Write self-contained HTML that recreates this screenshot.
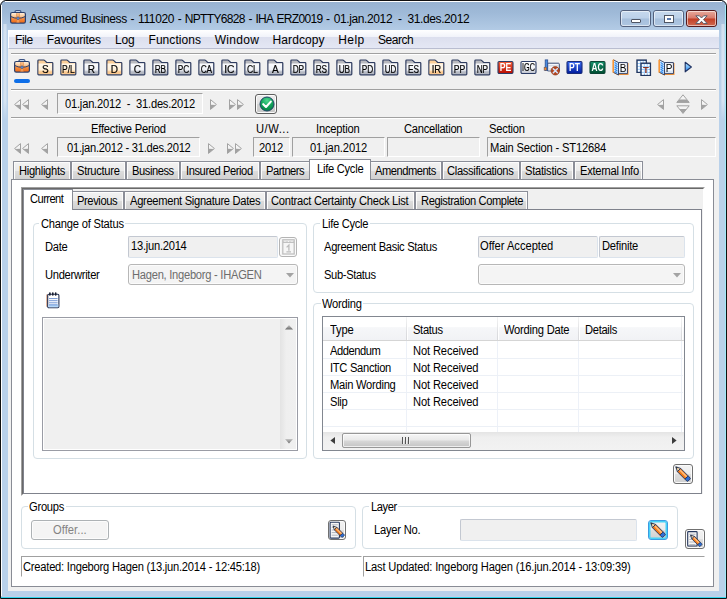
<!DOCTYPE html>
<html><head><meta charset="utf-8"><title>Assumed Business</title><style>
html,body{margin:0;padding:0;background:#fff}
body{width:727px;height:599px;overflow:hidden;position:relative;font-family:"Liberation Sans", Arial, sans-serif;font-size:11px}
#win{position:absolute;left:0;top:0;width:727px;height:599px;overflow:hidden}
.frame{position:absolute;left:0;top:0;width:727px;height:599px;box-sizing:border-box;border:1px solid #101010;border-radius:6px 6px 0 0;background:linear-gradient(#97b2d1 0,#9fbad8 12px,#b4cce6 30px,#b9d1ea 60px,#b9d1ea 100%)}
.hl-t{position:absolute;left:5px;top:1px;width:717px;height:1px;background:#fff}
.hl-l{position:absolute;left:1px;top:5px;width:1px;height:592px;background:#fff}
.hl-r{position:absolute;left:725px;top:5px;width:1px;height:592px;background:#9fe9f8}
.hl-b{position:absolute;left:1px;top:597px;width:725px;height:1px;background:#32d6ee;box-shadow:0 -1px 0 #c4cfe8}

.sb{position:absolute;top:24px;width:4px;height:96px;background:linear-gradient(rgba(185,209,234,0) 80%,#b9d1ea 100%),linear-gradient(90deg,rgba(255,255,255,.15),rgba(255,255,255,.5),rgba(255,255,255,.15))}
svg.g{will-change:transform}
#client{position:absolute;left:8px;top:30px;width:711px;height:561px;background:#f0f0f0}
#menu{position:absolute;left:8px;top:30px;width:711px;height:19px;box-sizing:border-box;border-bottom:1px solid #b9bdd0;border-left:1px solid #fff;background:linear-gradient(#ffffff 0,#f1f3fa 7px,#dcdfee 7px,#e4e7f4 18px)}
.t{position:absolute;white-space:pre;font-family:"Liberation Sans", Arial, sans-serif;transform-origin:0 0}
.cb{position:absolute;top:10px;height:17px;box-sizing:border-box;border:1px solid #53617d;border-radius:3px;background:linear-gradient(#c6d9ee 0,#bcd1e9 48%,#a6bfdc 52%,#aec6e1 100%)}
.cb .cbi{position:absolute;left:0;top:0;right:0;bottom:0;border:1px solid rgba(255,255,255,.55);border-radius:2px}
.cb.cl{border-color:#561a1c;background:linear-gradient(#e7aa9c 0,#d8796a 48%,#c23e25 52%,#cf6a52 100%)}
.btn{position:absolute;box-sizing:border-box;border:1px solid #707070;border-radius:3px;background:linear-gradient(#f3f3f3 0,#ececec 48%,#dedede 52%,#d0d0d0 100%);box-shadow:inset 0 0 0 1px #fbfbfb}
</style></head><body>
<div id="win">
<div class="frame"></div>
<div class="sb" style="left:3px"></div><div class="sb" style="left:721px"></div>
<div class="hl-t"></div><div class="hl-l"></div><div class="hl-r"></div><div class="hl-b"></div>
<svg width="16" height="16" viewBox="0 0 16 16" style="position:absolute;left:10px;top:9px">
<defs><linearGradient id="bgt" x1="0" y1="0" x2="0" y2="1"><stop offset="0" stop-color="#fff4e4"/><stop offset=".42" stop-color="#fac08a"/><stop offset=".5" stop-color="#f6944a"/><stop offset="1" stop-color="#ee6610"/></linearGradient></defs>
<path d="M5 3.2 Q5 1.5 6.5 1.5 H9.5 Q11 1.5 11 3.2" fill="#c8d8ee" stroke="#3b5384" stroke-width="1.2"/>
<rect x="0.6" y="3.5" width="14.8" height="10.6" rx="1.6" fill="url(#bgt)" stroke="#2c406c" stroke-width="1.2"/>
<path d="M1 7.6 Q4 9.3 8 9.3 Q12 9.3 15 7.6" fill="none" stroke="#2c406c" stroke-width="1"/>
<rect x="6.6" y="4.2" width="2.8" height="9.4" fill="#f7a867" opacity=".75"/>
<path d="M6.6 4.2V13.6M9.4 4.2V13.6" stroke="#d9782f" stroke-width=".5"/>
<circle cx="8" cy="9.2" r="1.3" fill="#6f9be0" stroke="#2c406c" stroke-width=".6"/>
</svg>
<span class="t" style="left:29.80px;top:10.84px;font-size:12px;line-height:16px;letter-spacing:-0.364px;color:#000;word-spacing:0.8px;">Assumed Business - 111020 -</span>
<span class="t" style="left:184.80px;top:10.84px;font-size:12px;line-height:16px;letter-spacing:-0.671px;color:#000;word-spacing:1.0px;">NPTTY6828 - IHA ERZ0019 -</span>
<span class="t" style="left:333.80px;top:10.84px;font-size:12px;line-height:16px;letter-spacing:-0.397px;color:#000;">01.jan.2012  -  31.des.2012</span>
<div class="cb" style="left:620px;width:31px"><div class="cbi"></div>
<div style="position:absolute;left:9.5px;top:7.5px;width:8px;height:2px;background:#fff;border:1px solid #4e5564;border-radius:1px"></div></div>
<div class="cb" style="left:653px;width:31px"><div class="cbi"></div>
<div style="position:absolute;left:10.5px;top:5px;width:4px;height:2px;border:2px solid #fff;outline:1px solid #4e5564;background:#5b7bb0"></div></div>
<div class="cb cl" style="left:686px;width:31px"><div class="cbi"></div>
<svg width="13" height="10" viewBox="0 0 13 10" style="position:absolute;left:8px;top:3.5px"><path d="M0.8 0.8 H4.4 L6.5 3 L8.6 0.8 H12.2 L8.5 4.6 L12.2 8.6 H8.6 L6.5 6.3 L4.4 8.6 H0.8 L4.5 4.6 Z" fill="#fff" stroke="#585d6a" stroke-width="1" stroke-linejoin="round"/></svg></div>
<div id="client">
</div>
<div id="menu"></div>
<span class="t" style="left:14.90px;top:31.84px;font-size:12px;line-height:16px;letter-spacing:-0.315px;color:#000;">File</span>
<span class="t" style="left:46.80px;top:31.84px;font-size:12px;line-height:16px;letter-spacing:-0.192px;color:#000;">Favourites</span>
<span class="t" style="left:114.90px;top:31.84px;font-size:12px;line-height:16px;letter-spacing:-0.166px;color:#000;">Log</span>
<span class="t" style="left:148.50px;top:31.84px;font-size:12px;line-height:16px;letter-spacing:0.059px;color:#000;">Functions</span>
<span class="t" style="left:214.70px;top:31.84px;font-size:12px;line-height:16px;letter-spacing:0.322px;color:#000;">Window</span>
<span class="t" style="left:272.60px;top:31.84px;font-size:12px;line-height:16px;letter-spacing:0.092px;color:#000;">Hardcopy</span>
<span class="t" style="left:338.30px;top:31.84px;font-size:12px;line-height:16px;letter-spacing:0.371px;color:#000;">Help</span>
<span class="t" style="left:378.10px;top:31.84px;font-size:12px;line-height:16px;letter-spacing:-0.486px;color:#000;">Search</span>
<div style="position:absolute;left:11px;top:53px;width:705px;height:1px;background:#a0a0a0"></div>
<div style="position:absolute;left:11px;top:54px;width:705px;height:1px;background:#fff"></div>
<div style="position:absolute;left:11px;top:89px;width:705px;height:1px;background:#a0a0a0"></div>
<div style="position:absolute;left:11px;top:90px;width:705px;height:1px;background:#fff"></div>
<div style="position:absolute;left:11px;top:117px;width:705px;height:1px;background:#a0a0a0"></div>
<div style="position:absolute;left:11px;top:118px;width:705px;height:1px;background:#fff"></div>
<svg width="16" height="16" viewBox="0 0 16 16" style="position:absolute;left:14px;top:58px">
<defs><linearGradient id="bgb" x1="0" y1="0" x2="0" y2="1"><stop offset="0" stop-color="#fff4e4"/><stop offset=".42" stop-color="#fac08a"/><stop offset=".5" stop-color="#f6944a"/><stop offset="1" stop-color="#ee6610"/></linearGradient></defs>
<path d="M5 3.2 Q5 1.5 6.5 1.5 H9.5 Q11 1.5 11 3.2" fill="#c8d8ee" stroke="#3b5384" stroke-width="1.2"/>
<rect x="0.6" y="3.5" width="14.8" height="10.6" rx="1.6" fill="url(#bgb)" stroke="#2c406c" stroke-width="1.2"/>
<path d="M1 7.6 Q4 9.3 8 9.3 Q12 9.3 15 7.6" fill="none" stroke="#2c406c" stroke-width="1"/>
<rect x="6.6" y="4.2" width="2.8" height="9.4" fill="#f7a867" opacity=".75"/>
<path d="M6.6 4.2V13.6M9.4 4.2V13.6" stroke="#d9782f" stroke-width=".5"/>
<circle cx="8" cy="9.2" r="1.3" fill="#6f9be0" stroke="#2c406c" stroke-width=".6"/>
</svg>
<div style="position:absolute;left:14px;top:79px;width:16px;height:4px;background:#0f6fe8;border-radius:2px"></div>
<svg width="18" height="17" viewBox="0 0 18 17" style="position:absolute;left:542.5px;top:58.5px">
<path d="M4.6 4.2 H15.4 Q16.3 4.2 16.3 5.1 V11.9 H4.6 Z" fill="#f4f6fa" stroke="#3a4c74" stroke-width="1"/>
<path d="M5.2 6.8 H15.8" stroke="#c3cad8" stroke-width=".9"/>
<path d="M5.2 9 H15.8 V11.4 H5.2Z" fill="#dfe4ec"/>
<rect x="2.2" y="0.9" width="2.5" height="10.6" fill="#4a8ce0" stroke="#2a4d8e" stroke-width=".8"/>
<rect x="1.1" y="8.2" width="2.6" height="3.2" fill="#f58a2a" stroke="#3a4c74" stroke-width=".5"/>
<circle cx="12.3" cy="11.8" r="4.2" fill="#b5461f" stroke="#8c3616" stroke-width=".7"/>
<path d="M10.3 9.8 L14.3 13.8 M14.3 9.8 L10.3 13.8" stroke="#d4e6ff" stroke-width="1.5" stroke-linecap="round"/>
</svg>
<svg width="9" height="12" viewBox="0 0 9 12" style="position:absolute;left:684.4px;top:61.4px">
<defs><linearGradient id="pl" x1="0" y1="0" x2="0" y2="1"><stop offset="0" stop-color="#b4e2ff"/><stop offset=".45" stop-color="#7cc0fa"/><stop offset="1" stop-color="#1f78ea"/></linearGradient></defs>
<path d="M1.2 1.2 L7.4 6 L1.2 10.8 Z" fill="url(#pl)" stroke="#1f3262" stroke-width="1.1" stroke-linejoin="round"/></svg>
<svg width="15" height="11" viewBox="0 0 15 11" style="position:absolute;left:14px;top:99px"><path d="M6.5 0.6 V10.4 L0.6 5.5 Z" fill="#f4f4f4" stroke="#a2a2a2" stroke-width="1" stroke-linejoin="round"/><path d="M6.5 5.8 V10.4 L1.2 6 Z" fill="#a2a2a2"/><path d="M14.5 0.6 V10.4 L8.6 5.5 Z" fill="#f4f4f4" stroke="#a2a2a2" stroke-width="1" stroke-linejoin="round"/><path d="M14.5 5.8 V10.4 L9.2 6 Z" fill="#a2a2a2"/></svg>
<svg width="7" height="11" viewBox="0 0 7 11" style="position:absolute;left:41px;top:99px"><path d="M6.5 0.6 V10.4 L0.6 5.5 Z" fill="#f4f4f4" stroke="#a2a2a2" stroke-width="1" stroke-linejoin="round"/><path d="M6.5 5.8 V10.4 L1.2 6 Z" fill="#a2a2a2"/></svg>
<svg width="7" height="11" viewBox="0 0 7 11" style="position:absolute;left:210px;top:99px"><path d="M0.5 0.6 V10.4 L6.4 5.5 Z" fill="#f4f4f4" stroke="#a2a2a2" stroke-width="1" stroke-linejoin="round"/><path d="M0.5 5.8 V10.4 L5.8 6 Z" fill="#a2a2a2"/></svg>
<svg width="15" height="11" viewBox="0 0 15 11" style="position:absolute;left:229px;top:99px"><path d="M0.5 0.6 V10.4 L6.4 5.5 Z" fill="#f4f4f4" stroke="#a2a2a2" stroke-width="1" stroke-linejoin="round"/><path d="M0.5 5.8 V10.4 L5.8 6 Z" fill="#a2a2a2"/><path d="M8.5 0.6 V10.4 L14.4 5.5 Z" fill="#f4f4f4" stroke="#a2a2a2" stroke-width="1" stroke-linejoin="round"/><path d="M8.5 5.8 V10.4 L13.8 6 Z" fill="#a2a2a2"/></svg>
<svg width="15" height="11" viewBox="0 0 15 11" style="position:absolute;left:14px;top:143px"><path d="M6.5 0.6 V10.4 L0.6 5.5 Z" fill="#f4f4f4" stroke="#a2a2a2" stroke-width="1" stroke-linejoin="round"/><path d="M6.5 5.8 V10.4 L1.2 6 Z" fill="#a2a2a2"/><path d="M14.5 0.6 V10.4 L8.6 5.5 Z" fill="#f4f4f4" stroke="#a2a2a2" stroke-width="1" stroke-linejoin="round"/><path d="M14.5 5.8 V10.4 L9.2 6 Z" fill="#a2a2a2"/></svg>
<svg width="7" height="11" viewBox="0 0 7 11" style="position:absolute;left:41px;top:143px"><path d="M6.5 0.6 V10.4 L0.6 5.5 Z" fill="#f4f4f4" stroke="#a2a2a2" stroke-width="1" stroke-linejoin="round"/><path d="M6.5 5.8 V10.4 L1.2 6 Z" fill="#a2a2a2"/></svg>
<svg width="7" height="11" viewBox="0 0 7 11" style="position:absolute;left:208px;top:143px"><path d="M0.5 0.6 V10.4 L6.4 5.5 Z" fill="#f4f4f4" stroke="#a2a2a2" stroke-width="1" stroke-linejoin="round"/><path d="M0.5 5.8 V10.4 L5.8 6 Z" fill="#a2a2a2"/></svg>
<svg width="15" height="11" viewBox="0 0 15 11" style="position:absolute;left:227px;top:143px"><path d="M0.5 0.6 V10.4 L6.4 5.5 Z" fill="#f4f4f4" stroke="#a2a2a2" stroke-width="1" stroke-linejoin="round"/><path d="M0.5 5.8 V10.4 L5.8 6 Z" fill="#a2a2a2"/><path d="M8.5 0.6 V10.4 L14.4 5.5 Z" fill="#f4f4f4" stroke="#a2a2a2" stroke-width="1" stroke-linejoin="round"/><path d="M8.5 5.8 V10.4 L13.8 6 Z" fill="#a2a2a2"/></svg>
<svg width="7" height="11" viewBox="0 0 7 11" style="position:absolute;left:657px;top:99px"><path d="M6.5 0.6 V10.4 L0.6 5.5 Z" fill="#f4f4f4" stroke="#a2a2a2" stroke-width="1" stroke-linejoin="round"/><path d="M6.5 5.8 V10.4 L1.2 6 Z" fill="#a2a2a2"/></svg>
<svg width="7" height="11" viewBox="0 0 7 11" style="position:absolute;left:701px;top:99px"><path d="M0.5 0.6 V10.4 L6.4 5.5 Z" fill="#f4f4f4" stroke="#a2a2a2" stroke-width="1" stroke-linejoin="round"/><path d="M0.5 5.8 V10.4 L5.8 6 Z" fill="#a2a2a2"/></svg>
<svg width="14" height="20" viewBox="0 0 14 20" style="position:absolute;left:675.6px;top:94.4px">
<path d="M7 0.8 L13.2 8.4 H0.8 Z" fill="#f4f4f4" stroke="#a2a2a2" stroke-linejoin="round"/><path d="M3.6 5.4 H10.4 L13.2 8.6 H0.8 Z" fill="#a2a2a2"/>
<path d="M7 19.4 L13.2 11.8 H0.8 Z" fill="#f4f4f4" stroke="#a2a2a2" stroke-linejoin="round"/><path d="M7 19.4 L10.6 15 H3.4 Z" fill="#a2a2a2"/></svg>
<div style="position:absolute;left:57px;top:93px;width:146px;height:21px;box-sizing:border-box;border:1px solid;border-color:#a0a0a0 #fff #fff #a0a0a0;background:#f0f0f0"></div>
<span class="t" style="left:64.70px;top:95.84px;font-size:12px;line-height:16px;letter-spacing:-0.231px;color:#000;transform:scaleX(0.930);">01.jan.2012  -  31.des.2012</span>
<div class="btn" style="left:255px;top:94px;width:22px;height:20px;border-color:#5e5e5e;background:linear-gradient(#ececec 0,#e2e2e2 48%,#d2d2d2 52%,#c6c6c6 100%)"></div>
<svg width="16" height="16" viewBox="0 0 16 16" style="position:absolute;left:258.5px;top:96px">
<defs><radialGradient id="gc" cx=".5" cy=".25" r=".8"><stop offset="0" stop-color="#4fd890"/><stop offset=".5" stop-color="#14a45c"/><stop offset="1" stop-color="#007a3c"/></radialGradient></defs>
<circle cx="8" cy="8" r="7" fill="url(#gc)" stroke="#1d4466" stroke-width="1"/>
<path d="M4.2 8.2 L7 11 L11.8 5.6" fill="none" stroke="#fff" stroke-width="2.1" stroke-linecap="round" stroke-linejoin="round"/></svg>
<span class="t" style="left:90.55px;top:120.84px;font-size:12px;line-height:16px;letter-spacing:-0.209px;color:#000;transform:scaleX(0.930);">Effective Period</span>
<span class="t" style="left:255.55px;top:120.84px;font-size:12px;line-height:16px;letter-spacing:0.573px;color:#000;transform:scaleX(0.930);">U/W...</span>
<span class="t" style="left:316.30px;top:120.84px;font-size:12px;line-height:16px;letter-spacing:-0.201px;color:#000;transform:scaleX(0.930);">Inception</span>
<span class="t" style="left:404.05px;top:120.84px;font-size:12px;line-height:16px;letter-spacing:-0.281px;color:#000;transform:scaleX(0.930);">Cancellation</span>
<span class="t" style="left:489.30px;top:120.84px;font-size:12px;line-height:16px;letter-spacing:-0.211px;color:#000;transform:scaleX(0.930);">Section</span>
<div style="position:absolute;left:57px;top:137px;width:143px;height:20px;box-sizing:border-box;border:1px solid;border-color:#a0a0a0 #fff #fff #a0a0a0;background:#f0f0f0"></div>
<div style="position:absolute;left:253px;top:137px;width:37px;height:20px;box-sizing:border-box;border:1px solid;border-color:#a0a0a0 #fff #fff #a0a0a0;background:#f0f0f0"></div>
<div style="position:absolute;left:292px;top:137px;width:93px;height:20px;box-sizing:border-box;border:1px solid;border-color:#a0a0a0 #fff #fff #a0a0a0;background:#f0f0f0"></div>
<div style="position:absolute;left:387px;top:137px;width:93px;height:20px;box-sizing:border-box;border:1px solid;border-color:#a0a0a0 #fff #fff #a0a0a0;background:#f0f0f0"></div>
<div style="position:absolute;left:487px;top:137px;width:229px;height:20px;box-sizing:border-box;border:1px solid;border-color:#a0a0a0 #fff #fff #a0a0a0;background:#f0f0f0"></div>
<span class="t" style="left:66.80px;top:139.84px;font-size:12px;line-height:16px;letter-spacing:-0.264px;color:#000;transform:scaleX(0.930);">01.jan.2012 - 31.des.2012</span>
<span class="t" style="left:259.30px;top:139.84px;font-size:12px;line-height:16px;letter-spacing:-0.191px;color:#000;transform:scaleX(0.930);">2012</span>
<span class="t" style="left:310.30px;top:139.84px;font-size:12px;line-height:16px;letter-spacing:-0.112px;color:#000;transform:scaleX(0.930);">01.jan.2012</span>
<span class="t" style="left:489.80px;top:139.84px;font-size:12px;line-height:16px;letter-spacing:-0.176px;color:#000;transform:scaleX(0.930);">Main Section - ST12684</span>
<div style="position:absolute;left:11px;top:179px;width:703px;height:408px;box-sizing:border-box;border:1px solid #898c95;background:#fff"></div>
<div style="position:absolute;left:13px;top:161px;width:58px;height:18px;box-sizing:border-box;border:1px solid #8b8e98;border-bottom:none;background:linear-gradient(#f2f2f2 0,#ebebeb 52%,#dddddd 52%,#d1d1d1 100%)"><div style="position:absolute;left:0;top:0;right:0;bottom:0;border:1px solid #fcfcfc;border-bottom:none"></div></div>
<span class="t" style="left:18.70px;top:162.84px;font-size:12px;line-height:16px;letter-spacing:-0.324px;color:#000;transform:scaleX(0.930);">Highlights</span>
<div style="position:absolute;left:71px;top:161px;width:55px;height:18px;box-sizing:border-box;border:1px solid #8b8e98;border-bottom:none;background:linear-gradient(#f2f2f2 0,#ebebeb 52%,#dddddd 52%,#d1d1d1 100%)"><div style="position:absolute;left:0;top:0;right:0;bottom:0;border:1px solid #fcfcfc;border-bottom:none"></div></div>
<span class="t" style="left:76.60px;top:162.84px;font-size:12px;line-height:16px;letter-spacing:-0.320px;color:#000;transform:scaleX(0.930);">Structure</span>
<div style="position:absolute;left:126px;top:161px;width:54px;height:18px;box-sizing:border-box;border:1px solid #8b8e98;border-bottom:none;background:linear-gradient(#f2f2f2 0,#ebebeb 52%,#dddddd 52%,#d1d1d1 100%)"><div style="position:absolute;left:0;top:0;right:0;bottom:0;border:1px solid #fcfcfc;border-bottom:none"></div></div>
<span class="t" style="left:131.70px;top:162.84px;font-size:12px;line-height:16px;letter-spacing:-0.475px;color:#000;transform:scaleX(0.930);">Business</span>
<div style="position:absolute;left:180px;top:161px;width:80px;height:18px;box-sizing:border-box;border:1px solid #8b8e98;border-bottom:none;background:linear-gradient(#f2f2f2 0,#ebebeb 52%,#dddddd 52%,#d1d1d1 100%)"><div style="position:absolute;left:0;top:0;right:0;bottom:0;border:1px solid #fcfcfc;border-bottom:none"></div></div>
<span class="t" style="left:185.80px;top:162.84px;font-size:12px;line-height:16px;letter-spacing:-0.454px;color:#000;transform:scaleX(0.930);">Insured Period</span>
<div style="position:absolute;left:260px;top:161px;width:51px;height:18px;box-sizing:border-box;border:1px solid #8b8e98;border-bottom:none;background:linear-gradient(#f2f2f2 0,#ebebeb 52%,#dddddd 52%,#d1d1d1 100%)"><div style="position:absolute;left:0;top:0;right:0;bottom:0;border:1px solid #fcfcfc;border-bottom:none"></div></div>
<span class="t" style="left:265.90px;top:162.84px;font-size:12px;line-height:16px;letter-spacing:-0.551px;color:#000;transform:scaleX(0.930);">Partners</span>
<div style="position:absolute;left:369px;top:161px;width:73px;height:18px;box-sizing:border-box;border:1px solid #8b8e98;border-bottom:none;background:linear-gradient(#f2f2f2 0,#ebebeb 52%,#dddddd 52%,#d1d1d1 100%)"><div style="position:absolute;left:0;top:0;right:0;bottom:0;border:1px solid #fcfcfc;border-bottom:none"></div></div>
<span class="t" style="left:374.80px;top:162.84px;font-size:12px;line-height:16px;letter-spacing:-0.532px;color:#000;transform:scaleX(0.930);">Amendments</span>
<div style="position:absolute;left:442px;top:161px;width:78px;height:18px;box-sizing:border-box;border:1px solid #8b8e98;border-bottom:none;background:linear-gradient(#f2f2f2 0,#ebebeb 52%,#dddddd 52%,#d1d1d1 100%)"><div style="position:absolute;left:0;top:0;right:0;bottom:0;border:1px solid #fcfcfc;border-bottom:none"></div></div>
<span class="t" style="left:447.20px;top:162.84px;font-size:12px;line-height:16px;letter-spacing:-0.348px;color:#000;transform:scaleX(0.930);">Classifications</span>
<div style="position:absolute;left:520px;top:161px;width:54px;height:18px;box-sizing:border-box;border:1px solid #8b8e98;border-bottom:none;background:linear-gradient(#f2f2f2 0,#ebebeb 52%,#dddddd 52%,#d1d1d1 100%)"><div style="position:absolute;left:0;top:0;right:0;bottom:0;border:1px solid #fcfcfc;border-bottom:none"></div></div>
<span class="t" style="left:525.40px;top:162.84px;font-size:12px;line-height:16px;letter-spacing:-0.269px;color:#000;transform:scaleX(0.930);">Statistics</span>
<div style="position:absolute;left:574px;top:161px;width:69px;height:18px;box-sizing:border-box;border:1px solid #8b8e98;border-bottom:none;background:linear-gradient(#f2f2f2 0,#ebebeb 52%,#dddddd 52%,#d1d1d1 100%)"><div style="position:absolute;left:0;top:0;right:0;bottom:0;border:1px solid #fcfcfc;border-bottom:none"></div></div>
<span class="t" style="left:579.70px;top:162.84px;font-size:12px;line-height:16px;letter-spacing:-0.319px;color:#000;transform:scaleX(0.930);">External Info</span>
<div style="position:absolute;left:309px;top:159px;width:62px;height:21px;box-sizing:border-box;border:1px solid #898c95;border-bottom:none;background:#fff"></div>
<span class="t" style="left:317.10px;top:160.84px;font-size:12px;line-height:16px;letter-spacing:-0.287px;color:#000;transform:scaleX(0.930);">Life Cycle</span>
<div style="position:absolute;left:21px;top:187px;width:684px;height:309px;box-sizing:border-box;border:1px solid;border-color:#a0a0a0 #fff #fff #a0a0a0;background:#f0f0f0"><div style="position:absolute;left:0;top:0;right:0;bottom:0;border:1px solid;border-color:#696969 #fff #fff #696969"></div></div>
<div style="position:absolute;left:23px;top:209px;width:679px;height:285px;box-sizing:border-box;border:1px solid #7f828c;background:#fff"></div>
<div style="position:absolute;left:71px;top:191px;width:53px;height:18px;box-sizing:border-box;border:1px solid #8b8e98;border-bottom:none;background:linear-gradient(#f2f2f2 0,#ebebeb 52%,#dddddd 52%,#d1d1d1 100%)"><div style="position:absolute;left:0;top:0;right:0;bottom:0;border:1px solid #fcfcfc;border-bottom:none"></div></div>
<span class="t" style="left:77.00px;top:192.84px;font-size:12px;line-height:16px;letter-spacing:-0.433px;color:#000;transform:scaleX(0.930);">Previous</span>
<div style="position:absolute;left:124px;top:191px;width:142px;height:18px;box-sizing:border-box;border:1px solid #8b8e98;border-bottom:none;background:linear-gradient(#f2f2f2 0,#ebebeb 52%,#dddddd 52%,#d1d1d1 100%)"><div style="position:absolute;left:0;top:0;right:0;bottom:0;border:1px solid #fcfcfc;border-bottom:none"></div></div>
<span class="t" style="left:129.70px;top:192.84px;font-size:12px;line-height:16px;letter-spacing:-0.324px;color:#000;transform:scaleX(0.930);">Agreement Signature Dates</span>
<div style="position:absolute;left:266px;top:191px;width:149px;height:18px;box-sizing:border-box;border:1px solid #8b8e98;border-bottom:none;background:linear-gradient(#f2f2f2 0,#ebebeb 52%,#dddddd 52%,#d1d1d1 100%)"><div style="position:absolute;left:0;top:0;right:0;bottom:0;border:1px solid #fcfcfc;border-bottom:none"></div></div>
<span class="t" style="left:270.90px;top:192.84px;font-size:12px;line-height:16px;letter-spacing:-0.286px;color:#000;transform:scaleX(0.930);">Contract Certainty Check List</span>
<div style="position:absolute;left:415px;top:191px;width:113px;height:18px;box-sizing:border-box;border:1px solid #8b8e98;border-bottom:none;background:linear-gradient(#f2f2f2 0,#ebebeb 52%,#dddddd 52%,#d1d1d1 100%)"><div style="position:absolute;left:0;top:0;right:0;bottom:0;border:1px solid #fcfcfc;border-bottom:none"></div></div>
<span class="t" style="left:421.10px;top:192.84px;font-size:12px;line-height:16px;letter-spacing:-0.426px;color:#000;transform:scaleX(0.930);">Registration Complete</span>
<div style="position:absolute;left:23px;top:189px;width:50px;height:21px;box-sizing:border-box;border:1px solid #898c95;border-bottom:none;background:#fff"></div>
<span class="t" style="left:30.20px;top:190.84px;font-size:12px;line-height:16px;letter-spacing:-0.612px;color:#000;transform:scaleX(0.930);">Current</span>
<div style="position:absolute;left:33px;top:223px;width:274px;height:236px;box-sizing:border-box;border:1px solid #d5dfe5;border-radius:4px"></div>
<div style="position:absolute;left:39.25px;top:221px;width:85.75px;height:5px;background:#fff"></div>
<span class="t" style="left:40.55px;top:215.84px;font-size:12px;line-height:16px;letter-spacing:-0.229px;color:#000;transform:scaleX(0.930);">Change of Status</span>
<div style="position:absolute;left:313px;top:223px;width:381px;height:70px;box-sizing:border-box;border:1px solid #d5dfe5;border-radius:4px"></div>
<div style="position:absolute;left:320.4px;top:221px;width:49.2px;height:5px;background:#fff"></div>
<span class="t" style="left:321.70px;top:215.84px;font-size:12px;line-height:16px;letter-spacing:-0.299px;color:#000;transform:scaleX(0.930);">Life Cycle</span>
<div style="position:absolute;left:313px;top:303px;width:381px;height:156px;box-sizing:border-box;border:1px solid #d5dfe5;border-radius:4px"></div>
<div style="position:absolute;left:320.5px;top:301px;width:42.75px;height:5px;background:#fff"></div>
<span class="t" style="left:321.80px;top:295.84px;font-size:12px;line-height:16px;letter-spacing:-0.234px;color:#000;transform:scaleX(0.930);">Wording</span>
<div style="position:absolute;left:21px;top:506px;width:335px;height:43px;box-sizing:border-box;border:1px solid #d5dfe5;border-radius:4px"></div>
<div style="position:absolute;left:27.5px;top:504px;width:38px;height:5px;background:#fff"></div>
<span class="t" style="left:28.80px;top:498.84px;font-size:12px;line-height:16px;letter-spacing:-0.280px;color:#000;transform:scaleX(0.930);">Groups</span>
<div style="position:absolute;left:362px;top:506px;width:316px;height:43px;box-sizing:border-box;border:1px solid #d5dfe5;border-radius:4px"></div>
<div style="position:absolute;left:369.25px;top:504px;width:29px;height:5px;background:#fff"></div>
<span class="t" style="left:370.55px;top:498.84px;font-size:12px;line-height:16px;letter-spacing:-0.438px;color:#000;transform:scaleX(0.930);">Layer</span>
<span class="t" style="left:44.80px;top:238.84px;font-size:12px;line-height:16px;letter-spacing:-0.317px;color:#000;transform:scaleX(0.930);">Date</span>
<div style="position:absolute;left:128px;top:236px;width:150px;height:22px;box-sizing:border-box;border:1px solid;border-color:#c3c8d1 #dbe3ec #dbe3ec #c3c8d1;border-radius:2px;background:#f0f0f0"></div>
<span class="t" style="left:131.30px;top:237.84px;font-size:12px;line-height:16px;letter-spacing:-0.273px;color:#000;transform:scaleX(0.930);">13.jun.2014</span>
<div style="position:absolute;left:279px;top:237px;width:18px;height:20px;box-sizing:border-box;border:1px solid #b4b4b4;border-radius:3px;background:#f4f4f4;box-shadow:inset 0 0 0 1px #fafafa"></div>
<svg width="13" height="16" viewBox="0 0 13 16" style="position:absolute;left:281.5px;top:239px">
<rect x="0.8" y="0.8" width="11.4" height="14.2" fill="#f6f6f6" stroke="#bcbcbc" stroke-width="1.2"/>
<path d="M1 3.2H12" stroke="#bcbcbc" stroke-width="1.4"/><path d="M3 2V3M6.5 2V3M10 2V3" stroke="#f6f6f6" stroke-width="1"/>
<path d="M4.6 8.4 L6.9 6 V11.8 M4.4 12.9H9" fill="none" stroke="#bcbcbc" stroke-width="1.3"/></svg>
<span class="t" style="left:44.80px;top:266.84px;font-size:12px;line-height:16px;letter-spacing:-0.309px;color:#000;transform:scaleX(0.930);">Underwriter</span>
<div style="position:absolute;left:128px;top:264px;width:170px;height:21px;box-sizing:border-box;border:1px solid #b7b7b7;border-radius:3px;background:#f4f4f4;box-shadow:inset 0 0 0 1px #fbfbfb"></div>
<svg width="8" height="5" viewBox="0 0 8 5" style="position:absolute;left:285.5px;top:272.5px"><path d="M0 0H8L4 4.5Z" fill="#a3a3a3"/></svg>
<span class="t" style="left:131.80px;top:266.84px;font-size:12px;line-height:16px;letter-spacing:-0.283px;color:#6d6d6d;transform:scaleX(0.930);">Hagen, Ingeborg - IHAGEN</span>
<svg width="14" height="17" viewBox="0 0 14 17" style="position:absolute;left:45.5px;top:291.5px">
<path d="M1.1 2.6V14.8" stroke="#c4642c" stroke-width="1.1"/>
<rect x="1.7" y="2.2" width="11.2" height="13.5" rx="1.2" fill="#fff" stroke="#202e52" stroke-width="1.1"/>
<rect x="2.3" y="12.4" width="10" height="2.8" fill="#b4d8fa"/>
<path d="M3 6.6H11.6M3 8.7H11.6M3 10.8H11.6M3 12.9H11.6" stroke="#6a8fd2" stroke-width=".95"/>
<path d="M3.9 1V3M6.8 1V3M9.7 1V3" stroke="#161c2e" stroke-width="1.6" stroke-linecap="round"/>
</svg>
<div style="position:absolute;left:42px;top:317px;width:256px;height:134px;box-sizing:border-box;border:1px solid #9a9ca5;background:#f0f0f0;box-shadow:inset 0 0 0 1px #fff"></div>
<div style="position:absolute;left:280px;top:319px;width:16px;height:130px;background:linear-gradient(90deg,#e3e3e3,#efefef 40%,#f0f0f0)"></div>
<svg width="8" height="5" viewBox="0 0 8 5" style="position:absolute;left:284.5px;top:325.3px"><defs><linearGradient id="ag" x1="0" y1="0" x2="0" y2="1"><stop offset="0" stop-color="#c8c8c8"/><stop offset="1" stop-color="#6a6a6a"/></linearGradient></defs><path d="M4 0L8 4.5H0Z" fill="url(#ag)"/></svg>
<svg width="8" height="5" viewBox="0 0 8 5" style="position:absolute;left:284.5px;top:438.7px"><path d="M0 0H8L4 4.5Z" fill="url(#ag)"/></svg>
<span class="t" style="left:324.30px;top:238.84px;font-size:12px;line-height:16px;letter-spacing:-0.329px;color:#000;transform:scaleX(0.930);">Agreement Basic Status</span>
<div style="position:absolute;left:478px;top:236px;width:120px;height:22px;box-sizing:border-box;border:1px solid;border-color:#c3c8d1 #dbe3ec #dbe3ec #c3c8d1;border-radius:2px;background:#f0f0f0"></div>
<span class="t" style="left:480.30px;top:237.84px;font-size:12px;line-height:16px;letter-spacing:-0.027px;color:#000;transform:scaleX(0.930);">Offer Accepted</span>
<div style="position:absolute;left:599px;top:236px;width:86px;height:22px;box-sizing:border-box;border:1px solid;border-color:#c3c8d1 #dbe3ec #dbe3ec #c3c8d1;border-radius:2px;background:#f0f0f0"></div>
<span class="t" style="left:602.30px;top:237.84px;font-size:12px;line-height:16px;letter-spacing:-0.236px;color:#000;transform:scaleX(0.930);">Definite</span>
<span class="t" style="left:324.30px;top:266.84px;font-size:12px;line-height:16px;letter-spacing:-0.379px;color:#000;transform:scaleX(0.930);">Sub-Status</span>
<div style="position:absolute;left:478px;top:264px;width:207px;height:21px;box-sizing:border-box;border:1px solid #b7b7b7;border-radius:3px;background:#f4f4f4;box-shadow:inset 0 0 0 1px #fbfbfb"></div>
<svg width="8" height="5" viewBox="0 0 8 5" style="position:absolute;left:672.5px;top:272.5px"><path d="M0 0H8L4 4.5Z" fill="#a3a3a3"/></svg>
<div style="position:absolute;left:322px;top:316px;width:363px;height:135px;box-sizing:border-box;border:1px solid #828790;background:#fff"></div>
<div style="position:absolute;left:323px;top:317px;width:361px;height:23px;background:linear-gradient(#fff 0,#fff 42%,#f6f7f9 46%,#f1f2f5 100%)"></div>
<div style="position:absolute;left:323px;top:340px;width:361px;height:1px;background:#d5d5d5"></div>
<div style="position:absolute;left:406px;top:317px;width:1px;height:23px;background:linear-gradient(#f4f4f4,#dcdde0 70%,#d8d9dc)"></div>
<div style="position:absolute;left:407px;top:317px;width:1px;height:23px;background:#fff"></div>
<div style="position:absolute;left:406px;top:341px;width:1px;height:91px;background:#edf1f8"></div>
<div style="position:absolute;left:497px;top:317px;width:1px;height:23px;background:linear-gradient(#f4f4f4,#dcdde0 70%,#d8d9dc)"></div>
<div style="position:absolute;left:498px;top:317px;width:1px;height:23px;background:#fff"></div>
<div style="position:absolute;left:497px;top:341px;width:1px;height:91px;background:#edf1f8"></div>
<div style="position:absolute;left:578px;top:317px;width:1px;height:23px;background:linear-gradient(#f4f4f4,#dcdde0 70%,#d8d9dc)"></div>
<div style="position:absolute;left:579px;top:317px;width:1px;height:23px;background:#fff"></div>
<div style="position:absolute;left:578px;top:341px;width:1px;height:91px;background:#edf1f8"></div>
<div style="position:absolute;left:681px;top:317px;width:1px;height:23px;background:linear-gradient(#f4f4f4,#dcdde0 70%,#d8d9dc)"></div>
<div style="position:absolute;left:682px;top:317px;width:1px;height:23px;background:#fff"></div>
<div style="position:absolute;left:681px;top:341px;width:1px;height:91px;background:#edf1f8"></div>
<div style="position:absolute;left:323px;top:358px;width:360px;height:1px;background:#ecf0f6"></div>
<div style="position:absolute;left:323px;top:375px;width:360px;height:1px;background:#ecf0f6"></div>
<div style="position:absolute;left:323px;top:392px;width:360px;height:1px;background:#ecf0f6"></div>
<div style="position:absolute;left:323px;top:409px;width:360px;height:1px;background:#ecf0f6"></div>
<div style="position:absolute;left:323px;top:426px;width:360px;height:1px;background:#ecf0f6"></div>
<span class="t" style="left:329.80px;top:321.84px;font-size:12px;line-height:16px;letter-spacing:-0.141px;color:#000;transform:scaleX(0.930);">Type</span>
<span class="t" style="left:412.55px;top:321.84px;font-size:12px;line-height:16px;letter-spacing:-0.344px;color:#000;transform:scaleX(0.930);">Status</span>
<span class="t" style="left:503.80px;top:321.84px;font-size:12px;line-height:16px;letter-spacing:-0.243px;color:#000;transform:scaleX(0.930);">Wording Date</span>
<span class="t" style="left:584.55px;top:321.84px;font-size:12px;line-height:16px;letter-spacing:-0.326px;color:#000;transform:scaleX(0.930);">Details</span>
<span class="t" style="left:329.80px;top:342.84px;font-size:12px;line-height:16px;letter-spacing:-0.489px;color:#000;transform:scaleX(0.930);">Addendum</span>
<span class="t" style="left:412.55px;top:342.84px;font-size:12px;line-height:16px;letter-spacing:-0.142px;color:#000;transform:scaleX(0.930);">Not Received</span>
<span class="t" style="left:329.80px;top:359.84px;font-size:12px;line-height:16px;letter-spacing:-0.315px;color:#000;transform:scaleX(0.930);">ITC Sanction</span>
<span class="t" style="left:412.55px;top:359.84px;font-size:12px;line-height:16px;letter-spacing:-0.142px;color:#000;transform:scaleX(0.930);">Not Received</span>
<span class="t" style="left:329.80px;top:376.84px;font-size:12px;line-height:16px;letter-spacing:-0.278px;color:#000;transform:scaleX(0.930);">Main Wording</span>
<span class="t" style="left:412.55px;top:376.84px;font-size:12px;line-height:16px;letter-spacing:-0.142px;color:#000;transform:scaleX(0.930);">Not Received</span>
<span class="t" style="left:329.80px;top:393.84px;font-size:12px;line-height:16px;letter-spacing:-0.300px;color:#000;transform:scaleX(0.930);">Slip</span>
<span class="t" style="left:412.55px;top:393.84px;font-size:12px;line-height:16px;letter-spacing:-0.142px;color:#000;transform:scaleX(0.930);">Not Received</span>
<div style="position:absolute;left:323px;top:432px;width:361px;height:18px;background:linear-gradient(#e4e4e4,#efefef 30%,#f2f2f2)"></div>
<div style="position:absolute;left:342px;top:433px;width:129px;height:15px;box-sizing:border-box;border:1px solid #979797;border-radius:2px;background:linear-gradient(#f6f6f6 0,#e9e9e9 48%,#d8d8d8 52%,#c4c4c4 100%);box-shadow:inset 0 0 0 1px rgba(255,255,255,.7)"></div>
<div style="position:absolute;left:402px;top:437px;width:1px;height:7px;background:#555"></div>
<div style="position:absolute;left:403px;top:437px;width:1px;height:7px;background:#eee"></div>
<div style="position:absolute;left:405px;top:437px;width:1px;height:7px;background:#555"></div>
<div style="position:absolute;left:406px;top:437px;width:1px;height:7px;background:#eee"></div>
<div style="position:absolute;left:408px;top:437px;width:1px;height:7px;background:#555"></div>
<div style="position:absolute;left:409px;top:437px;width:1px;height:7px;background:#eee"></div>
<svg width="5" height="7" viewBox="0 0 5 7" style="position:absolute;left:329.8px;top:437px"><path d="M5 0V7L0.4 3.5Z" fill="#3c3c3c"/></svg>
<svg width="5" height="7" viewBox="0 0 5 7" style="position:absolute;left:672.4px;top:437px"><path d="M0 0V7L4.6 3.5Z" fill="#3c3c3c"/></svg>
<div class="btn" style="left:673px;top:464px;width:20px;height:20px"></div>
<svg width="16" height="16" viewBox="0 0 16 16" style="position:absolute;left:675px;top:466px">
<g transform="rotate(45 8 8)">
<path d="M-2.2 8 L2.4 5.7 V10.3 Z" fill="#f7d9a8" stroke="#26385e" stroke-width=".9" stroke-linejoin="round"/>
<path d="M-2.2 8 L-0.2 7 V9 Z" fill="#333"/>
<rect x="2.4" y="5.7" width="10.6" height="4.6" fill="#f47a18" stroke="#26385e" stroke-width=".9"/>
<rect x="2.9" y="6.6" width="9.8" height="1.5" fill="#ffbe7e"/>
<rect x="13" y="5.7" width="3.6" height="4.6" rx="1" fill="#2f6fd6" stroke="#26385e" stroke-width=".9"/>
</g></svg>
<div class="btn" style="left:648px;top:520px;width:20px;height:20px;border-color:#3c9be2;box-shadow:inset 0 0 0 1.5px #46d2f8"></div>
<svg width="16" height="16" viewBox="0 0 16 16" style="position:absolute;left:650px;top:522px">
<g transform="rotate(45 8 8)">
<path d="M-2.2 8 L2.4 5.7 V10.3 Z" fill="#f7d9a8" stroke="#26385e" stroke-width=".9" stroke-linejoin="round"/>
<path d="M-2.2 8 L-0.2 7 V9 Z" fill="#333"/>
<rect x="2.4" y="5.7" width="10.6" height="4.6" fill="#f47a18" stroke="#26385e" stroke-width=".9"/>
<rect x="2.9" y="6.6" width="9.8" height="1.5" fill="#ffbe7e"/>
<rect x="13" y="5.7" width="3.6" height="4.6" rx="1" fill="#2f6fd6" stroke="#26385e" stroke-width=".9"/>
</g></svg>
<div class="btn" style="left:685px;top:529px;width:20px;height:20px"></div>
<svg width="20" height="20" viewBox="0 0 20 20" style="position:absolute;left:685px;top:529px">
<rect x="2.7" y="2.6" width="9.399999999999999" height="14.4" rx=".8" fill="#f8f8f8" stroke="#26385e" stroke-width="1.1"/>
<path d="M4.300000000000001 5.2H10.5M4.300000000000001 7.800000000000001H10.5M4.300000000000001 10.4H10.5M4.300000000000001 13.0H10.5M4.300000000000001 15.6H10.5" stroke="#a8aeb8" stroke-width=".9"/>
<g transform="translate(4.9 5.4) scale(0.79)"><g transform="rotate(45 8 8)"><path d="M-2.2 8 L2.4 5.7 V10.3 Z" fill="#f7d9a8" stroke="#26385e" stroke-width="1" stroke-linejoin="round"/>
<path d="M-2.2 8 L-0.2 7 V9 Z" fill="#333"/>
<rect x="2.4" y="5.7" width="10.6" height="4.6" fill="#f47a18" stroke="#26385e" stroke-width="1"/>
<rect x="2.9" y="6.6" width="9.8" height="1.5" fill="#ffbe7e"/>
<rect x="13" y="5.7" width="3.6" height="4.6" rx="1" fill="#2f6fd6" stroke="#26385e" stroke-width="1"/></g></g></svg>
<div class="btn" style="left:328px;top:520px;width:18px;height:20px"></div>
<svg width="18" height="20" viewBox="0 0 18 20" style="position:absolute;left:328px;top:520px">
<rect x="2.1" y="2.2" width="9.3" height="15.900000000000002" rx=".8" fill="#f8f8f8" stroke="#26385e" stroke-width="1.1"/>
<path d="M3.7 4.800000000000001H9.8M3.7 7.4H9.8M3.7 10.0H9.8M3.7 12.600000000000001H9.8M3.7 15.2H9.8" stroke="#a8aeb8" stroke-width=".9"/>
<g transform="translate(4.4 5.4) scale(0.78)"><g transform="rotate(45 8 8)"><path d="M-2.2 8 L2.4 5.7 V10.3 Z" fill="#f7d9a8" stroke="#26385e" stroke-width="1" stroke-linejoin="round"/>
<path d="M-2.2 8 L-0.2 7 V9 Z" fill="#333"/>
<rect x="2.4" y="5.7" width="10.6" height="4.6" fill="#f47a18" stroke="#26385e" stroke-width="1"/>
<rect x="2.9" y="6.6" width="9.8" height="1.5" fill="#ffbe7e"/>
<rect x="13" y="5.7" width="3.6" height="4.6" rx="1" fill="#2f6fd6" stroke="#26385e" stroke-width="1"/></g></g></svg>
<div style="position:absolute;left:31px;top:520px;width:78px;height:20px;box-sizing:border-box;border:1px solid #adb2b5;border-radius:3px;background:#f4f4f4;box-shadow:inset 0 0 0 1px #fcfcfc"></div>
<span class="t" style="left:52.70px;top:521.84px;font-size:12px;line-height:16px;letter-spacing:0.063px;color:#838383;transform:scaleX(0.930);">Offer...</span>
<span class="t" style="left:373.55px;top:521.84px;font-size:12px;line-height:16px;letter-spacing:-0.247px;color:#000;transform:scaleX(0.930);">Layer No.</span>
<div style="position:absolute;left:460px;top:519px;width:177px;height:22px;box-sizing:border-box;border:1px solid;border-color:#c3c8d1 #dbe3ec #dbe3ec #c3c8d1;border-radius:2px;background:#f0f0f0"></div>
<div style="position:absolute;left:21px;top:556px;width:341px;height:21px;box-sizing:border-box;border:1px solid;border-color:#a0a0a0 #fff #fff #a0a0a0;background:#fff"></div>
<div style="position:absolute;left:363px;top:556px;width:342px;height:21px;box-sizing:border-box;border:1px solid;border-color:#a0a0a0 #fff #fff #a0a0a0;background:#fff"></div>
<span class="t" style="left:23.30px;top:558.84px;font-size:12px;line-height:16px;letter-spacing:-0.249px;color:#000;transform:scaleX(0.930);">Created: Ingeborg Hagen (13.jun.2014 - 12:45:18)</span>
<span class="t" style="left:365.30px;top:558.84px;font-size:12px;line-height:16px;letter-spacing:-0.187px;color:#000;transform:scaleX(0.930);">Last Updated: Ingeborg Hagen (16.jun.2014 - 13:09:39)</span>
<svg class="g" width="17" height="17" viewBox="0 0 17 17" style="position:absolute;left:37px;top:58.5px">
<defs><linearGradient id="f37" x1="0" y1="0" x2="0" y2="1"><stop offset="0" stop-color="#fff8ec"/><stop offset=".62" stop-color="#fff0d8"/><stop offset=".8" stop-color="#fbc88e"/><stop offset="1" stop-color="#fbc88e"/></linearGradient></defs>
<path d="M0.9 1.8 Q0.9 1 1.7 1 H6.7 Q7.4 1 7.9 1.6 L9.6 3.5 H15 Q15.8 3.5 15.8 4.3 V15 Q15.8 15.8 15 15.8 H1.7 Q0.9 15.8 0.9 15 Z" fill="#fbcf98" stroke="#2e3c60" stroke-width="1.2"/>
<path d="M1.7 4.4 H15 V14.3 Q15 15 14.3 15 H2.4 Q1.7 15 1.7 14.3 Z" fill="url(#f37)"/>
<text x="8.4" y="13.5" font-family='"Liberation Sans", Arial, sans-serif' font-size="10" text-anchor="middle" fill="#000" stroke="#000" stroke-width=".18">S</text>
</svg>
<svg class="g" width="17" height="17" viewBox="0 0 17 17" style="position:absolute;left:60px;top:58.5px">
<defs><linearGradient id="f60" x1="0" y1="0" x2="0" y2="1"><stop offset="0" stop-color="#fff8ec"/><stop offset=".62" stop-color="#fff0d8"/><stop offset=".8" stop-color="#fbc88e"/><stop offset="1" stop-color="#fbc88e"/></linearGradient></defs>
<path d="M0.9 1.8 Q0.9 1 1.7 1 H6.7 Q7.4 1 7.9 1.6 L9.6 3.5 H15 Q15.8 3.5 15.8 4.3 V15 Q15.8 15.8 15 15.8 H1.7 Q0.9 15.8 0.9 15 Z" fill="#fbcf98" stroke="#2e3c60" stroke-width="1.2"/>
<path d="M1.7 4.4 H15 V14.3 Q15 15 14.3 15 H2.4 Q1.7 15 1.7 14.3 Z" fill="url(#f60)"/>
<text x="8.4" y="13.5" font-family='"Liberation Sans", Arial, sans-serif' font-size="10" text-anchor="middle" fill="#000" stroke="#000" stroke-width=".18" textLength="12.8" lengthAdjust="spacingAndGlyphs">P/L</text>
</svg>
<svg class="g" width="17" height="17" viewBox="0 0 17 17" style="position:absolute;left:83px;top:58.5px">
<defs><linearGradient id="f83" x1="0" y1="0" x2="0" y2="1"><stop offset="0" stop-color="#fafbfd"/><stop offset=".62" stop-color="#eef1f6"/><stop offset=".8" stop-color="#b4b8c2"/><stop offset="1" stop-color="#b4b8c2"/></linearGradient></defs>
<path d="M0.9 1.8 Q0.9 1 1.7 1 H6.7 Q7.4 1 7.9 1.6 L9.6 3.5 H15 Q15.8 3.5 15.8 4.3 V15 Q15.8 15.8 15 15.8 H1.7 Q0.9 15.8 0.9 15 Z" fill="#b8b9be" stroke="#2e3c60" stroke-width="1.2"/>
<path d="M1.7 4.4 H15 V14.3 Q15 15 14.3 15 H2.4 Q1.7 15 1.7 14.3 Z" fill="url(#f83)"/>
<text x="8.4" y="13.5" font-family='"Liberation Sans", Arial, sans-serif' font-size="10" text-anchor="middle" fill="#000" stroke="#000" stroke-width=".18">R</text>
</svg>
<svg class="g" width="17" height="17" viewBox="0 0 17 17" style="position:absolute;left:106px;top:58.5px">
<defs><linearGradient id="f106" x1="0" y1="0" x2="0" y2="1"><stop offset="0" stop-color="#fff8ec"/><stop offset=".62" stop-color="#fff0d8"/><stop offset=".8" stop-color="#fbc88e"/><stop offset="1" stop-color="#fbc88e"/></linearGradient></defs>
<path d="M0.9 1.8 Q0.9 1 1.7 1 H6.7 Q7.4 1 7.9 1.6 L9.6 3.5 H15 Q15.8 3.5 15.8 4.3 V15 Q15.8 15.8 15 15.8 H1.7 Q0.9 15.8 0.9 15 Z" fill="#fbcf98" stroke="#2e3c60" stroke-width="1.2"/>
<path d="M1.7 4.4 H15 V14.3 Q15 15 14.3 15 H2.4 Q1.7 15 1.7 14.3 Z" fill="url(#f106)"/>
<text x="8.4" y="13.5" font-family='"Liberation Sans", Arial, sans-serif' font-size="10" text-anchor="middle" fill="#000" stroke="#000" stroke-width=".18">D</text>
</svg>
<svg class="g" width="17" height="17" viewBox="0 0 17 17" style="position:absolute;left:129px;top:58.5px">
<defs><linearGradient id="f129" x1="0" y1="0" x2="0" y2="1"><stop offset="0" stop-color="#fafbfd"/><stop offset=".62" stop-color="#eef1f6"/><stop offset=".8" stop-color="#b4b8c2"/><stop offset="1" stop-color="#b4b8c2"/></linearGradient></defs>
<path d="M0.9 1.8 Q0.9 1 1.7 1 H6.7 Q7.4 1 7.9 1.6 L9.6 3.5 H15 Q15.8 3.5 15.8 4.3 V15 Q15.8 15.8 15 15.8 H1.7 Q0.9 15.8 0.9 15 Z" fill="#b8b9be" stroke="#2e3c60" stroke-width="1.2"/>
<path d="M1.7 4.4 H15 V14.3 Q15 15 14.3 15 H2.4 Q1.7 15 1.7 14.3 Z" fill="url(#f129)"/>
<text x="8.4" y="13.5" font-family='"Liberation Sans", Arial, sans-serif' font-size="10" text-anchor="middle" fill="#000" stroke="#000" stroke-width=".18">C</text>
</svg>
<svg class="g" width="17" height="17" viewBox="0 0 17 17" style="position:absolute;left:152px;top:58.5px">
<defs><linearGradient id="f152" x1="0" y1="0" x2="0" y2="1"><stop offset="0" stop-color="#fafbfd"/><stop offset=".62" stop-color="#eef1f6"/><stop offset=".8" stop-color="#b4b8c2"/><stop offset="1" stop-color="#b4b8c2"/></linearGradient></defs>
<path d="M0.9 1.8 Q0.9 1 1.7 1 H6.7 Q7.4 1 7.9 1.6 L9.6 3.5 H15 Q15.8 3.5 15.8 4.3 V15 Q15.8 15.8 15 15.8 H1.7 Q0.9 15.8 0.9 15 Z" fill="#b8b9be" stroke="#2e3c60" stroke-width="1.2"/>
<path d="M1.7 4.4 H15 V14.3 Q15 15 14.3 15 H2.4 Q1.7 15 1.7 14.3 Z" fill="url(#f152)"/>
<text x="8.4" y="13.5" font-family='"Liberation Sans", Arial, sans-serif' font-size="10" text-anchor="middle" fill="#000" stroke="#000" stroke-width=".18" textLength="11.5" lengthAdjust="spacingAndGlyphs">RB</text>
</svg>
<svg class="g" width="17" height="17" viewBox="0 0 17 17" style="position:absolute;left:175px;top:58.5px">
<defs><linearGradient id="f175" x1="0" y1="0" x2="0" y2="1"><stop offset="0" stop-color="#fafbfd"/><stop offset=".62" stop-color="#eef1f6"/><stop offset=".8" stop-color="#b4b8c2"/><stop offset="1" stop-color="#b4b8c2"/></linearGradient></defs>
<path d="M0.9 1.8 Q0.9 1 1.7 1 H6.7 Q7.4 1 7.9 1.6 L9.6 3.5 H15 Q15.8 3.5 15.8 4.3 V15 Q15.8 15.8 15 15.8 H1.7 Q0.9 15.8 0.9 15 Z" fill="#b8b9be" stroke="#2e3c60" stroke-width="1.2"/>
<path d="M1.7 4.4 H15 V14.3 Q15 15 14.3 15 H2.4 Q1.7 15 1.7 14.3 Z" fill="url(#f175)"/>
<text x="8.4" y="13.5" font-family='"Liberation Sans", Arial, sans-serif' font-size="10" text-anchor="middle" fill="#000" stroke="#000" stroke-width=".18" textLength="11.5" lengthAdjust="spacingAndGlyphs">PC</text>
</svg>
<svg class="g" width="17" height="17" viewBox="0 0 17 17" style="position:absolute;left:198px;top:58.5px">
<defs><linearGradient id="f198" x1="0" y1="0" x2="0" y2="1"><stop offset="0" stop-color="#fafbfd"/><stop offset=".62" stop-color="#eef1f6"/><stop offset=".8" stop-color="#b4b8c2"/><stop offset="1" stop-color="#b4b8c2"/></linearGradient></defs>
<path d="M0.9 1.8 Q0.9 1 1.7 1 H6.7 Q7.4 1 7.9 1.6 L9.6 3.5 H15 Q15.8 3.5 15.8 4.3 V15 Q15.8 15.8 15 15.8 H1.7 Q0.9 15.8 0.9 15 Z" fill="#b8b9be" stroke="#2e3c60" stroke-width="1.2"/>
<path d="M1.7 4.4 H15 V14.3 Q15 15 14.3 15 H2.4 Q1.7 15 1.7 14.3 Z" fill="url(#f198)"/>
<text x="8.4" y="13.5" font-family='"Liberation Sans", Arial, sans-serif' font-size="10" text-anchor="middle" fill="#000" stroke="#000" stroke-width=".18" textLength="11.5" lengthAdjust="spacingAndGlyphs">CA</text>
</svg>
<svg class="g" width="17" height="17" viewBox="0 0 17 17" style="position:absolute;left:221px;top:58.5px">
<defs><linearGradient id="f221" x1="0" y1="0" x2="0" y2="1"><stop offset="0" stop-color="#fafbfd"/><stop offset=".62" stop-color="#eef1f6"/><stop offset=".8" stop-color="#b4b8c2"/><stop offset="1" stop-color="#b4b8c2"/></linearGradient></defs>
<path d="M0.9 1.8 Q0.9 1 1.7 1 H6.7 Q7.4 1 7.9 1.6 L9.6 3.5 H15 Q15.8 3.5 15.8 4.3 V15 Q15.8 15.8 15 15.8 H1.7 Q0.9 15.8 0.9 15 Z" fill="#b8b9be" stroke="#2e3c60" stroke-width="1.2"/>
<path d="M1.7 4.4 H15 V14.3 Q15 15 14.3 15 H2.4 Q1.7 15 1.7 14.3 Z" fill="url(#f221)"/>
<text x="8.4" y="13.5" font-family='"Liberation Sans", Arial, sans-serif' font-size="10" text-anchor="middle" fill="#000" stroke="#000" stroke-width=".18" textLength="10.3" lengthAdjust="spacingAndGlyphs">IC</text>
</svg>
<svg class="g" width="17" height="17" viewBox="0 0 17 17" style="position:absolute;left:244px;top:58.5px">
<defs><linearGradient id="f244" x1="0" y1="0" x2="0" y2="1"><stop offset="0" stop-color="#fafbfd"/><stop offset=".62" stop-color="#eef1f6"/><stop offset=".8" stop-color="#b4b8c2"/><stop offset="1" stop-color="#b4b8c2"/></linearGradient></defs>
<path d="M0.9 1.8 Q0.9 1 1.7 1 H6.7 Q7.4 1 7.9 1.6 L9.6 3.5 H15 Q15.8 3.5 15.8 4.3 V15 Q15.8 15.8 15 15.8 H1.7 Q0.9 15.8 0.9 15 Z" fill="#b8b9be" stroke="#2e3c60" stroke-width="1.2"/>
<path d="M1.7 4.4 H15 V14.3 Q15 15 14.3 15 H2.4 Q1.7 15 1.7 14.3 Z" fill="url(#f244)"/>
<text x="8.4" y="13.5" font-family='"Liberation Sans", Arial, sans-serif' font-size="10" text-anchor="middle" fill="#000" stroke="#000" stroke-width=".18" textLength="11" lengthAdjust="spacingAndGlyphs">CL</text>
</svg>
<svg class="g" width="17" height="17" viewBox="0 0 17 17" style="position:absolute;left:267px;top:58.5px">
<defs><linearGradient id="f267" x1="0" y1="0" x2="0" y2="1"><stop offset="0" stop-color="#fafbfd"/><stop offset=".62" stop-color="#eef1f6"/><stop offset=".8" stop-color="#b4b8c2"/><stop offset="1" stop-color="#b4b8c2"/></linearGradient></defs>
<path d="M0.9 1.8 Q0.9 1 1.7 1 H6.7 Q7.4 1 7.9 1.6 L9.6 3.5 H15 Q15.8 3.5 15.8 4.3 V15 Q15.8 15.8 15 15.8 H1.7 Q0.9 15.8 0.9 15 Z" fill="#b8b9be" stroke="#2e3c60" stroke-width="1.2"/>
<path d="M1.7 4.4 H15 V14.3 Q15 15 14.3 15 H2.4 Q1.7 15 1.7 14.3 Z" fill="url(#f267)"/>
<text x="8.4" y="13.5" font-family='"Liberation Sans", Arial, sans-serif' font-size="10" text-anchor="middle" fill="#000" stroke="#000" stroke-width=".18">A</text>
</svg>
<svg class="g" width="17" height="17" viewBox="0 0 17 17" style="position:absolute;left:290px;top:58.5px">
<defs><linearGradient id="f290" x1="0" y1="0" x2="0" y2="1"><stop offset="0" stop-color="#fafbfd"/><stop offset=".62" stop-color="#eef1f6"/><stop offset=".8" stop-color="#b4b8c2"/><stop offset="1" stop-color="#b4b8c2"/></linearGradient></defs>
<path d="M0.9 1.8 Q0.9 1 1.7 1 H6.7 Q7.4 1 7.9 1.6 L9.6 3.5 H15 Q15.8 3.5 15.8 4.3 V15 Q15.8 15.8 15 15.8 H1.7 Q0.9 15.8 0.9 15 Z" fill="#b8b9be" stroke="#2e3c60" stroke-width="1.2"/>
<path d="M1.7 4.4 H15 V14.3 Q15 15 14.3 15 H2.4 Q1.7 15 1.7 14.3 Z" fill="url(#f290)"/>
<text x="8.4" y="13.5" font-family='"Liberation Sans", Arial, sans-serif' font-size="10" text-anchor="middle" fill="#000" stroke="#000" stroke-width=".18" textLength="11.5" lengthAdjust="spacingAndGlyphs">DP</text>
</svg>
<svg class="g" width="17" height="17" viewBox="0 0 17 17" style="position:absolute;left:313px;top:58.5px">
<defs><linearGradient id="f313" x1="0" y1="0" x2="0" y2="1"><stop offset="0" stop-color="#fafbfd"/><stop offset=".62" stop-color="#eef1f6"/><stop offset=".8" stop-color="#b4b8c2"/><stop offset="1" stop-color="#b4b8c2"/></linearGradient></defs>
<path d="M0.9 1.8 Q0.9 1 1.7 1 H6.7 Q7.4 1 7.9 1.6 L9.6 3.5 H15 Q15.8 3.5 15.8 4.3 V15 Q15.8 15.8 15 15.8 H1.7 Q0.9 15.8 0.9 15 Z" fill="#b8b9be" stroke="#2e3c60" stroke-width="1.2"/>
<path d="M1.7 4.4 H15 V14.3 Q15 15 14.3 15 H2.4 Q1.7 15 1.7 14.3 Z" fill="url(#f313)"/>
<text x="8.4" y="13.5" font-family='"Liberation Sans", Arial, sans-serif' font-size="10" text-anchor="middle" fill="#000" stroke="#000" stroke-width=".18" textLength="11.5" lengthAdjust="spacingAndGlyphs">RS</text>
</svg>
<svg class="g" width="17" height="17" viewBox="0 0 17 17" style="position:absolute;left:336px;top:58.5px">
<defs><linearGradient id="f336" x1="0" y1="0" x2="0" y2="1"><stop offset="0" stop-color="#fafbfd"/><stop offset=".62" stop-color="#eef1f6"/><stop offset=".8" stop-color="#b4b8c2"/><stop offset="1" stop-color="#b4b8c2"/></linearGradient></defs>
<path d="M0.9 1.8 Q0.9 1 1.7 1 H6.7 Q7.4 1 7.9 1.6 L9.6 3.5 H15 Q15.8 3.5 15.8 4.3 V15 Q15.8 15.8 15 15.8 H1.7 Q0.9 15.8 0.9 15 Z" fill="#b8b9be" stroke="#2e3c60" stroke-width="1.2"/>
<path d="M1.7 4.4 H15 V14.3 Q15 15 14.3 15 H2.4 Q1.7 15 1.7 14.3 Z" fill="url(#f336)"/>
<text x="8.4" y="13.5" font-family='"Liberation Sans", Arial, sans-serif' font-size="10" text-anchor="middle" fill="#000" stroke="#000" stroke-width=".18" textLength="11.5" lengthAdjust="spacingAndGlyphs">UB</text>
</svg>
<svg class="g" width="17" height="17" viewBox="0 0 17 17" style="position:absolute;left:359px;top:58.5px">
<defs><linearGradient id="f359" x1="0" y1="0" x2="0" y2="1"><stop offset="0" stop-color="#fafbfd"/><stop offset=".62" stop-color="#eef1f6"/><stop offset=".8" stop-color="#b4b8c2"/><stop offset="1" stop-color="#b4b8c2"/></linearGradient></defs>
<path d="M0.9 1.8 Q0.9 1 1.7 1 H6.7 Q7.4 1 7.9 1.6 L9.6 3.5 H15 Q15.8 3.5 15.8 4.3 V15 Q15.8 15.8 15 15.8 H1.7 Q0.9 15.8 0.9 15 Z" fill="#b8b9be" stroke="#2e3c60" stroke-width="1.2"/>
<path d="M1.7 4.4 H15 V14.3 Q15 15 14.3 15 H2.4 Q1.7 15 1.7 14.3 Z" fill="url(#f359)"/>
<text x="8.4" y="13.5" font-family='"Liberation Sans", Arial, sans-serif' font-size="10" text-anchor="middle" fill="#000" stroke="#000" stroke-width=".18" textLength="11.5" lengthAdjust="spacingAndGlyphs">PD</text>
</svg>
<svg class="g" width="17" height="17" viewBox="0 0 17 17" style="position:absolute;left:382px;top:58.5px">
<defs><linearGradient id="f382" x1="0" y1="0" x2="0" y2="1"><stop offset="0" stop-color="#fafbfd"/><stop offset=".62" stop-color="#eef1f6"/><stop offset=".8" stop-color="#b4b8c2"/><stop offset="1" stop-color="#b4b8c2"/></linearGradient></defs>
<path d="M0.9 1.8 Q0.9 1 1.7 1 H6.7 Q7.4 1 7.9 1.6 L9.6 3.5 H15 Q15.8 3.5 15.8 4.3 V15 Q15.8 15.8 15 15.8 H1.7 Q0.9 15.8 0.9 15 Z" fill="#b8b9be" stroke="#2e3c60" stroke-width="1.2"/>
<path d="M1.7 4.4 H15 V14.3 Q15 15 14.3 15 H2.4 Q1.7 15 1.7 14.3 Z" fill="url(#f382)"/>
<text x="8.4" y="13.5" font-family='"Liberation Sans", Arial, sans-serif' font-size="10" text-anchor="middle" fill="#000" stroke="#000" stroke-width=".18" textLength="11.5" lengthAdjust="spacingAndGlyphs">UD</text>
</svg>
<svg class="g" width="17" height="17" viewBox="0 0 17 17" style="position:absolute;left:405px;top:58.5px">
<defs><linearGradient id="f405" x1="0" y1="0" x2="0" y2="1"><stop offset="0" stop-color="#fafbfd"/><stop offset=".62" stop-color="#eef1f6"/><stop offset=".8" stop-color="#b4b8c2"/><stop offset="1" stop-color="#b4b8c2"/></linearGradient></defs>
<path d="M0.9 1.8 Q0.9 1 1.7 1 H6.7 Q7.4 1 7.9 1.6 L9.6 3.5 H15 Q15.8 3.5 15.8 4.3 V15 Q15.8 15.8 15 15.8 H1.7 Q0.9 15.8 0.9 15 Z" fill="#b8b9be" stroke="#2e3c60" stroke-width="1.2"/>
<path d="M1.7 4.4 H15 V14.3 Q15 15 14.3 15 H2.4 Q1.7 15 1.7 14.3 Z" fill="url(#f405)"/>
<text x="8.4" y="13.5" font-family='"Liberation Sans", Arial, sans-serif' font-size="10" text-anchor="middle" fill="#000" stroke="#000" stroke-width=".18" textLength="11" lengthAdjust="spacingAndGlyphs">ES</text>
</svg>
<svg class="g" width="17" height="17" viewBox="0 0 17 17" style="position:absolute;left:428px;top:58.5px">
<defs><linearGradient id="f428" x1="0" y1="0" x2="0" y2="1"><stop offset="0" stop-color="#fff8ec"/><stop offset=".62" stop-color="#fff0d8"/><stop offset=".8" stop-color="#fbc88e"/><stop offset="1" stop-color="#fbc88e"/></linearGradient></defs>
<path d="M0.9 1.8 Q0.9 1 1.7 1 H6.7 Q7.4 1 7.9 1.6 L9.6 3.5 H15 Q15.8 3.5 15.8 4.3 V15 Q15.8 15.8 15 15.8 H1.7 Q0.9 15.8 0.9 15 Z" fill="#fbcf98" stroke="#2e3c60" stroke-width="1.2"/>
<path d="M1.7 4.4 H15 V14.3 Q15 15 14.3 15 H2.4 Q1.7 15 1.7 14.3 Z" fill="url(#f428)"/>
<text x="8.4" y="13.5" font-family='"Liberation Sans", Arial, sans-serif' font-size="10" text-anchor="middle" fill="#000" stroke="#000" stroke-width=".18" textLength="9.5" lengthAdjust="spacingAndGlyphs">IR</text>
</svg>
<svg class="g" width="17" height="17" viewBox="0 0 17 17" style="position:absolute;left:451px;top:58.5px">
<defs><linearGradient id="f451" x1="0" y1="0" x2="0" y2="1"><stop offset="0" stop-color="#fafbfd"/><stop offset=".62" stop-color="#eef1f6"/><stop offset=".8" stop-color="#b4b8c2"/><stop offset="1" stop-color="#b4b8c2"/></linearGradient></defs>
<path d="M0.9 1.8 Q0.9 1 1.7 1 H6.7 Q7.4 1 7.9 1.6 L9.6 3.5 H15 Q15.8 3.5 15.8 4.3 V15 Q15.8 15.8 15 15.8 H1.7 Q0.9 15.8 0.9 15 Z" fill="#b8b9be" stroke="#2e3c60" stroke-width="1.2"/>
<path d="M1.7 4.4 H15 V14.3 Q15 15 14.3 15 H2.4 Q1.7 15 1.7 14.3 Z" fill="url(#f451)"/>
<text x="8.4" y="13.5" font-family='"Liberation Sans", Arial, sans-serif' font-size="10" text-anchor="middle" fill="#000" stroke="#000" stroke-width=".18" textLength="11.5" lengthAdjust="spacingAndGlyphs">PP</text>
</svg>
<svg class="g" width="17" height="17" viewBox="0 0 17 17" style="position:absolute;left:474px;top:58.5px">
<defs><linearGradient id="f474" x1="0" y1="0" x2="0" y2="1"><stop offset="0" stop-color="#fafbfd"/><stop offset=".62" stop-color="#eef1f6"/><stop offset=".8" stop-color="#b4b8c2"/><stop offset="1" stop-color="#b4b8c2"/></linearGradient></defs>
<path d="M0.9 1.8 Q0.9 1 1.7 1 H6.7 Q7.4 1 7.9 1.6 L9.6 3.5 H15 Q15.8 3.5 15.8 4.3 V15 Q15.8 15.8 15 15.8 H1.7 Q0.9 15.8 0.9 15 Z" fill="#b8b9be" stroke="#2e3c60" stroke-width="1.2"/>
<path d="M1.7 4.4 H15 V14.3 Q15 15 14.3 15 H2.4 Q1.7 15 1.7 14.3 Z" fill="url(#f474)"/>
<text x="8.4" y="13.5" font-family='"Liberation Sans", Arial, sans-serif' font-size="10" text-anchor="middle" fill="#000" stroke="#000" stroke-width=".18" textLength="11.5" lengthAdjust="spacingAndGlyphs">NP</text>
</svg>
<svg class="g" width="17" height="15" viewBox="0 0 17 15" style="position:absolute;left:496.5px;top:60px">
<defs><linearGradient id="l497" x1="0" y1="0" x2="0" y2="1"><stop offset="0" stop-color="#f4603a"/><stop offset="1" stop-color="#b80c00"/></linearGradient></defs>
<rect x="1" y="1.5" width="15" height="12" rx="1.2" fill="url(#l497)" stroke="#2b3c66" stroke-width="1.1"/>
<text x="8.5" y="11" font-family='"Liberation Sans", Arial, sans-serif' font-size="10" font-weight="bold" text-anchor="middle" fill="#fff" textLength="11.6" lengthAdjust="spacingAndGlyphs">PE</text></svg>
<svg class="g" width="17" height="15" viewBox="0 0 17 15" style="position:absolute;left:519.5px;top:60px">
<defs><linearGradient id="ligc" x1="0" y1="0" x2="0" y2="1"><stop offset="0" stop-color="#ffffff"/><stop offset=".6" stop-color="#eef1f6"/><stop offset="1" stop-color="#b9bec9"/></linearGradient></defs>
<rect x="1" y="1.5" width="15" height="12" rx="1.2" fill="url(#ligc)" stroke="#2b3c66" stroke-width="1.1"/>
<text x="8.5" y="11" font-family='"Liberation Sans", Arial, sans-serif' font-size="10" text-anchor="middle" fill="#000" stroke="#000" stroke-width=".2" textLength="12.8" lengthAdjust="spacingAndGlyphs">IGC</text></svg>
<svg class="g" width="17" height="15" viewBox="0 0 17 15" style="position:absolute;left:565.5px;top:60px">
<defs><linearGradient id="l566" x1="0" y1="0" x2="0" y2="1"><stop offset="0" stop-color="#3a6cf0"/><stop offset="1" stop-color="#001c9c"/></linearGradient></defs>
<rect x="1" y="1.5" width="15" height="12" rx="1.2" fill="url(#l566)" stroke="#1a2c78" stroke-width="1.1"/>
<text x="8.5" y="11" font-family='"Liberation Sans", Arial, sans-serif' font-size="10" font-weight="bold" text-anchor="middle" fill="#fff" textLength="10.8" lengthAdjust="spacingAndGlyphs">PT</text></svg>
<svg class="g" width="17" height="15" viewBox="0 0 17 15" style="position:absolute;left:588.5px;top:60px">
<defs><linearGradient id="l589" x1="0" y1="0" x2="0" y2="1"><stop offset="0" stop-color="#16906c"/><stop offset="1" stop-color="#004c30"/></linearGradient></defs>
<rect x="1" y="1.5" width="15" height="12" rx="1.2" fill="url(#l589)" stroke="#0c4434" stroke-width="1.1"/>
<text x="8.5" y="11" font-family='"Liberation Sans", Arial, sans-serif' font-size="10" font-weight="bold" text-anchor="middle" fill="#fff" textLength="12" lengthAdjust="spacingAndGlyphs">AC</text></svg>
<svg class="g" width="17" height="17" viewBox="0 0 17 17" style="position:absolute;left:611.5px;top:58.5px">
<path d="M6.4 4 H16.5 V16 H6.4 Z" fill="#f6973a"/>
<path d="M0.4 1 L1.6 0.6 L6.6 15 L6.6 16.6 L0.4 13.6 Z" fill="#f6973a"/>
<path d="M6.5 3.6 H15.4 V14.6 H6.5 Z" fill="#fbfcfe" stroke="#2e3c60" stroke-width="1"/>
<path d="M7 11.6H14.9V14.1H7Z" fill="#d6e4f4"/>
<path d="M1.5 0.9 L6.5 3.5 V16 L1.5 13.3 Z" fill="#d2e8ff" stroke="#2e3c60" stroke-width=".9" stroke-linejoin="round"/>
<path d="M2.2 0.9 L1.5 0.9 L1.5 13.3" fill="none" stroke="#f6973a" stroke-width="1"/>
<path d="M2.6 3.4 L5.4 5.6 M2.6 5.6 L5.4 7.8 M2.6 7.8 L5.4 10 M2.6 10 L5.4 12.2 M2.6 12.2 L5.4 14.4" stroke="#2f88ea" stroke-width="1.15"/>
<text x="11" y="12.6" font-family='"Liberation Sans", Arial, sans-serif' font-size="10" text-anchor="middle" fill="#000">B</text></svg>
<svg class="g" width="16" height="17" viewBox="0 0 16 17" style="position:absolute;left:635.5px;top:58.5px">
<rect x="1" y="1.1" width="9.2" height="12.2" fill="#9ccdfb" stroke="#22365f" stroke-width="1.4"/>
<rect x="1.9" y="2.1" width="1.9" height="1.9" fill="#fff"/><rect x="1.9" y="5.0" width="1.9" height="1.9" fill="#fff"/><rect x="1.9" y="7.9" width="1.9" height="1.9" fill="#fff"/><rect x="1.9" y="10.8" width="1.9" height="1.9" fill="#fff"/><rect x="4.8" y="2.1" width="1.9" height="1.9" fill="#fff"/><rect x="4.8" y="5.0" width="1.9" height="1.9" fill="#fff"/><rect x="4.8" y="7.9" width="1.9" height="1.9" fill="#fff"/><rect x="4.8" y="10.8" width="1.9" height="1.9" fill="#fff"/><rect x="7.7" y="2.1" width="1.9" height="1.9" fill="#fff"/><rect x="7.7" y="5.0" width="1.9" height="1.9" fill="#fff"/><rect x="7.7" y="7.9" width="1.9" height="1.9" fill="#fff"/><rect x="7.7" y="10.8" width="1.9" height="1.9" fill="#fff"/>
<rect x="5" y="4.2" width="9.4" height="12.2" fill="#9ccdfb" stroke="#22365f" stroke-width="1.4"/>
<rect x="5.9" y="5.2" width="1.9" height="1.9" fill="#fff"/><rect x="5.9" y="8.1" width="1.9" height="1.9" fill="#fff"/><rect x="5.9" y="11.0" width="1.9" height="1.9" fill="#fff"/><rect x="5.9" y="13.9" width="1.9" height="1.9" fill="#fff"/><rect x="8.8" y="5.2" width="1.9" height="1.9" fill="#fff"/><rect x="8.8" y="8.1" width="1.9" height="1.9" fill="#fff"/><rect x="8.8" y="11.0" width="1.9" height="1.9" fill="#fff"/><rect x="8.8" y="13.9" width="1.9" height="1.9" fill="#fff"/><rect x="11.7" y="5.2" width="1.9" height="1.9" fill="#fff"/><rect x="11.7" y="8.1" width="1.9" height="1.9" fill="#fff"/><rect x="11.7" y="11.0" width="1.9" height="1.9" fill="#fff"/><rect x="11.7" y="13.9" width="1.9" height="1.9" fill="#fff"/>
<text x="9.8" y="13.7" font-family='"Liberation Sans", Arial, sans-serif' font-size="9.5" font-weight="bold" text-anchor="middle" fill="#8a3020">T</text></svg>
<svg class="g" width="17" height="17" viewBox="0 0 17 17" style="position:absolute;left:657.5px;top:58.5px">
<path d="M6.4 4 H16.5 V16 H6.4 Z" fill="#f6973a"/>
<path d="M0.4 1 L1.6 0.6 L6.6 15 L6.6 16.6 L0.4 13.6 Z" fill="#f6973a"/>
<path d="M6.5 3.6 H15.4 V14.6 H6.5 Z" fill="#fbfcfe" stroke="#2e3c60" stroke-width="1"/>
<path d="M7 11.6H14.9V14.1H7Z" fill="#d6e4f4"/>
<path d="M1.5 0.9 L6.5 3.5 V16 L1.5 13.3 Z" fill="#d2e8ff" stroke="#2e3c60" stroke-width=".9" stroke-linejoin="round"/>
<path d="M2.2 0.9 L1.5 0.9 L1.5 13.3" fill="none" stroke="#f6973a" stroke-width="1"/>
<path d="M2.6 3.4 L5.4 5.6 M2.6 5.6 L5.4 7.8 M2.6 7.8 L5.4 10 M2.6 10 L5.4 12.2 M2.6 12.2 L5.4 14.4" stroke="#2f88ea" stroke-width="1.15"/>
<text x="11" y="12.6" font-family='"Liberation Sans", Arial, sans-serif' font-size="10" text-anchor="middle" fill="#000">P</text></svg>
</div>
</body></html>
